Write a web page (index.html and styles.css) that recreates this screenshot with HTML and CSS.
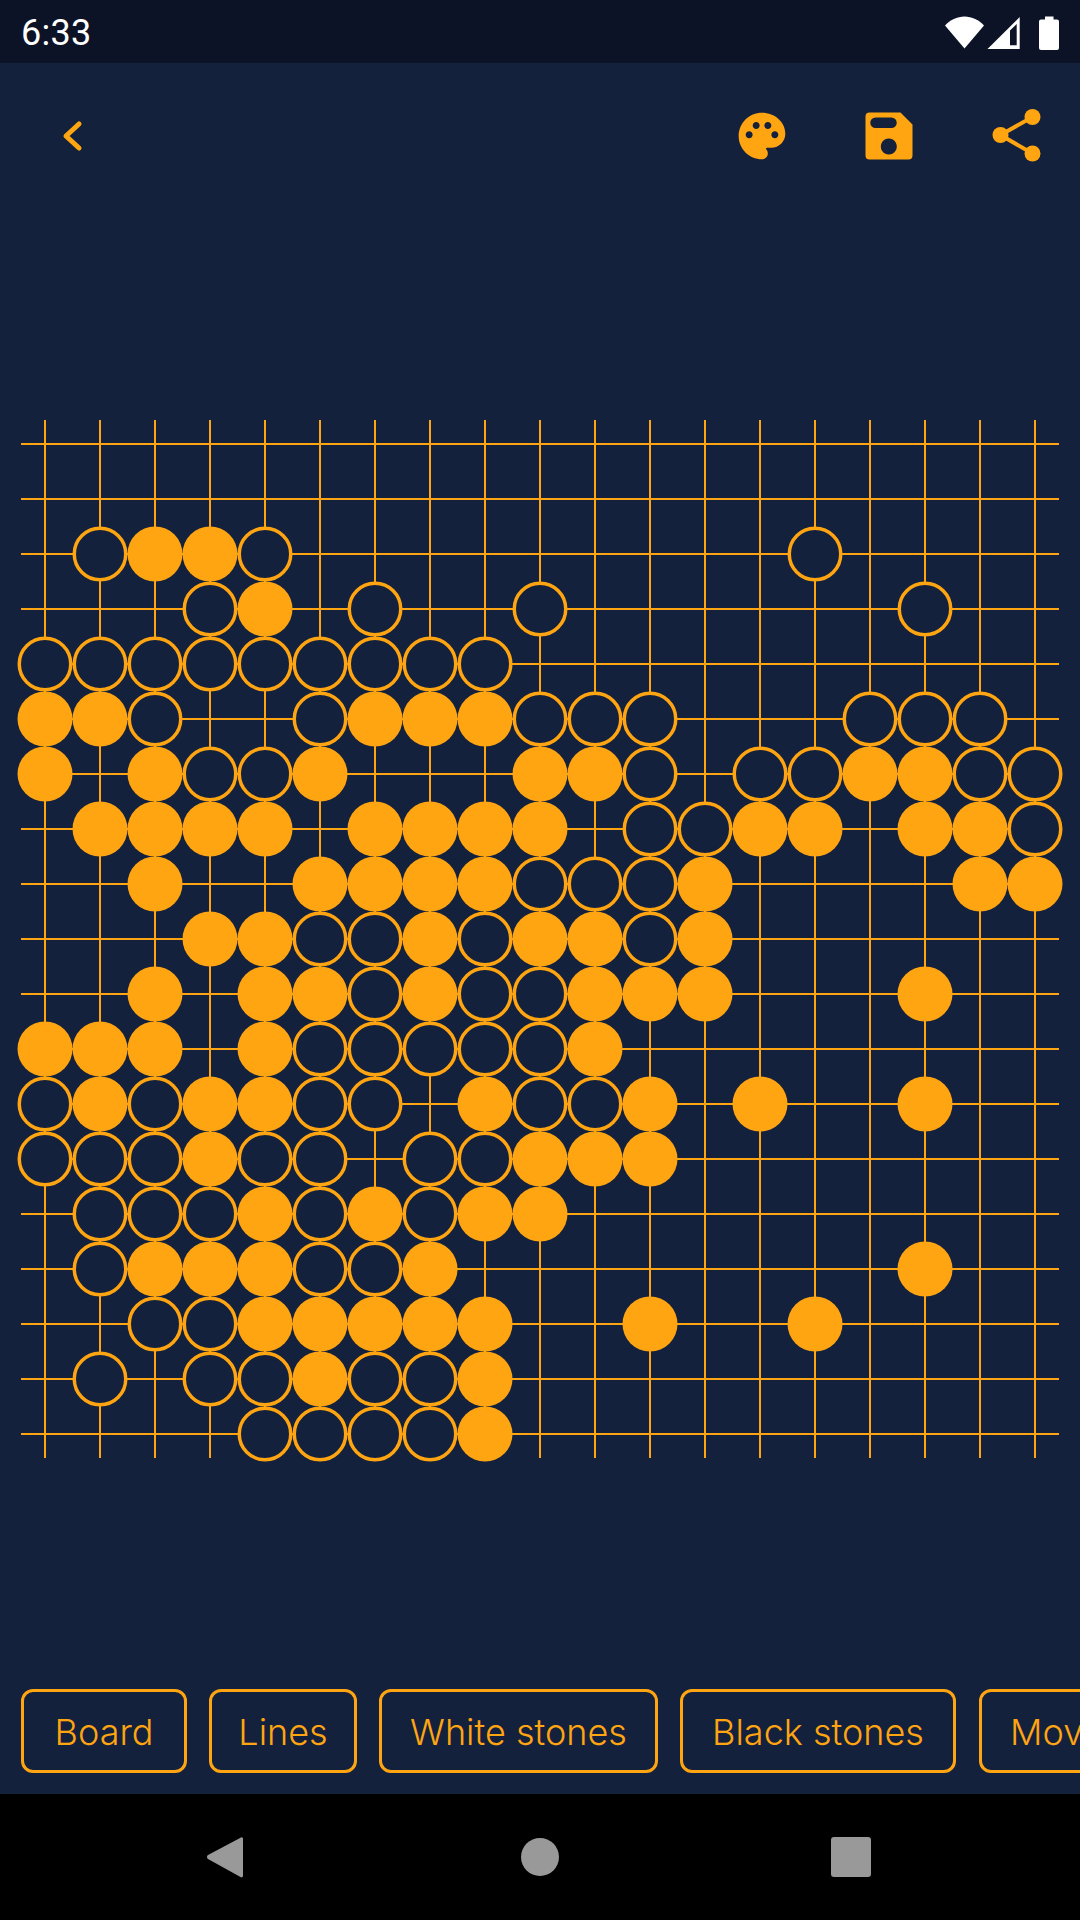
FILE: index.html
```html
<!DOCTYPE html>
<html lang="en">
<head>
  <meta charset="UTF-8" />
  <meta name="viewport" content="width=device-width, initial-scale=1.0"/>
  <title>Board theme</title>
  <link rel="stylesheet" href="styles.css">
</head>
<body>
  <div class="screen">
    <div class="status-bar">
      <span class="clock">6:33</span>
      <svg class="status-icons" width="118" height="36" viewBox="0 0 118 36">
        <path class="white" d="M4 11.5C9 6 16 2.5 23.5 2.500S38 6 43 11.500L23.500 34.500Z"/>
        <path class="white" d="M78.700 3V35H46.500Z"/>
        <path class="dim" d="M69 16.500L75.700 10V31.200H69Z"/>
        <path class="white" d="M104 2.500H112.500V5.500H116a2 2 0 0 1 2 2V34a2 2 0 0 1-2 2H100a2 2 0 0 1-2-2V7.500a2 2 0 0 1 2-2H104Z"/>
      </svg>
    </div>

    <div class="toolbar">
      <svg class="icon back" width="24" height="34" viewBox="0 0 24 34">
        <polyline points="19,5 6,17 19,29"/>
      </svg>
      <div class="actions">
        <svg class="icon" width="56" height="56" viewBox="0 0 24 24">
          <path class="solid" fill-rule="evenodd" d="M12 2C6.490 2 2 6.490 2 12s4.490 10 10 10c1.380 0 2.500-1.120 2.500-2.500 0-.61-.23-1.200-.64-1.670-.08-.1-.13-.21-.13-.33 0-.28.22-.5.5-.5H16c3.310 0 6-2.690 6-6 0-4.960-4.490-9-10-9zm5.500 11c-.83 0-1.500-.67-1.500-1.500s.67-1.500 1.500-1.500 1.500.67 1.500 1.500-.67 1.500-1.500 1.500zm-3-4c-.83 0-1.500-.67-1.500-1.500S13.670 6 14.500 6s1.500.67 1.500 1.500S15.330 9 14.500 9zM5 11.500c0-.83.67-1.500 1.500-1.500s1.500.67 1.500 1.500S7.330 13 6.500 13 5 12.330 5 11.500zm6-4c0 .83-.67 1.500-1.500 1.500S8 8.330 8 7.500 8.670 6 9.500 6s1.500.67 1.500 1.500z"/>
        </svg>
        <svg class="icon" width="56" height="56" viewBox="-4.500 -4.500 56 56">
          <path class="solid" fill-rule="evenodd" d="M4 0H35L47 12V43a4 4 0 0 1-4 4H4a4 4 0 0 1-4-4V4a4 4 0 0 1 4-4ZM10 5a5 5 0 0 0 0 10.500H26a5 5 0 0 0 0-10.500ZM23.300 26a8 8 0 1 0 .01 0Z"/>
        </svg>
        <svg class="icon" width="56" height="56" viewBox="0 0 56 56">
          <g class="solid">
            <circle cx="44.500" cy="9" r="8"/>
            <circle cx="12.500" cy="27" r="8"/>
            <circle cx="44.500" cy="45.500" r="8"/>
          </g>
          <polyline class="share-line" points="44.500,9 12.500,27 44.500,45.500"/>
        </svg>
      </div>
    </div>

    <svg id="board" class="board" width="1080" height="1050" viewBox="0 0 1080 1050"></svg>

    <div class="chips">
      <button type="button" class="chip chip-board">Board</button>
      <button type="button" class="chip chip-lines">Lines</button>
      <button type="button" class="chip chip-white">White stones</button>
      <button type="button" class="chip chip-black">Black stones</button>
      <button type="button" class="chip chip-moves">Moves</button>
    </div>

    <div class="nav-bar">
      <svg width="40" height="44" viewBox="0 0 40 44">
        <path class="nav-shape" d="M36 2.500a1.500 1.500 0 0 1 2 1V41a1.500 1.500 0 0 1-2.500 1L3 24a2.500 2.500 0 0 1 0-4Z"/>
      </svg>
      <span class="nav-home"></span>
      <span class="nav-recent"></span>
    </div>
  </div>

  <script src="board.js"></script>
</body>
</html>
```

FILE: styles.css
```css
html, body {
  margin: 0;
  padding: 0;
}
body {
  width: 1080px;
  height: 1920px;
  overflow: hidden;
  background: #14213d;
}
.screen {
  display: flex;
  flex-direction: column;
  width: 1080px;
  height: 1920px;
  overflow: hidden;
}

.status-bar {
  display: flex;
  align-items: center;
  justify-content: space-between;
  flex: none;
  height: 63px;
  padding: 0 21px 0 21px;
  box-sizing: border-box;
  background: #0d1326;
}
.clock {
  margin-top: 3px;
  font-family: Roboto, sans-serif;
  font-size: 36px;
  letter-spacing: 0.3px;
  color: #fff;
}
.white { fill: #fff; }
.dim { fill: #0d1326; }

.toolbar {
  display: flex;
  align-items: center;
  justify-content: space-between;
  flex: none;
  height: 145px;
  padding: 0 36px 0 60px;
  box-sizing: border-box;
}
.actions {
  display: flex;
  align-items: center;
  gap: 71px;
}
.icon { display: block; }
.solid { fill: #ffa511; }
.back polyline {
  fill: none;
  stroke: #ffa511;
  stroke-width: 5;
  stroke-linecap: round;
  stroke-linejoin: round;
}
.share-line {
  fill: none;
  stroke: #ffa511;
  stroke-width: 4;
}

.board {
  display: block;
  flex: none;
  margin-top: 211px;
}
.grid-line {
  stroke: #ffa511;
  stroke-width: 2;
}
.stone-white {
  fill: #14213d;
  stroke: #ffa511;
  stroke-width: 3.5;
}
.stone-black { fill: #ffa511; }

.chips {
  display: flex;
  gap: 22px;
  flex: none;
  margin-top: auto;
  padding: 0 0 21px 21px;
}
.chip {
  flex: none;
  height: 84px;
  padding: 2px 0 0;
  box-sizing: border-box;
  border: 3px solid #ffa511;
  border-radius: 12px;
  background: transparent;
  font-family: Inter, sans-serif;
  font-size: 36px;
  font-weight: 350;
  color: #ffa511;
}
.chip-board { width: 166px; }
.chip-lines { width: 148px; }
.chip-white { width: 279px; }
.chip-black { width: 276px; }
.chip-moves { width: 174px; margin-left: 1px; }

.nav-bar {
  display: flex;
  align-items: center;
  flex: none;
  gap: 0;
  height: 126px;
  background: #000;
  position: relative;
}
.nav-bar svg,
.nav-home,
.nav-recent {
  position: absolute;
}
.nav-bar svg { left: 205px; top: 41px; }
.nav-shape { fill: #999; }
.nav-home {
  left: 521px;
  top: 44px;
  width: 38px;
  height: 38px;
  border-radius: 50%;
  background: #999;
}
.nav-recent {
  left: 831px;
  top: 43px;
  width: 40px;
  height: 40px;
  border-radius: 3px;
  background: #999;
}
```

FILE: board.js
```js
// O = hollow stone, X = filled stone
const rows = [
  "...................",
  "...................",
  ".OXXO.........O....",
  "...OX.O..O......O..",
  "OOOOOOOOO..........",
  "XXO..OXXXOOO...OOO.",
  "X.XOOX...XXO.OOXXOO",
  ".XXXX.XXXX.OOXX.XXO",
  "..X..XXXXOOOX....XX",
  "...XXOOXOXXOX......",
  "..X.XXOXOOXXX...X..",
  "XXX.XOOOOOX........",
  "OXOXXOO.XOOX.X..X..",
  "OOOXOO.OOXXX.......",
  ".OOOXOXOXX.........",
  ".OXXXOOX........X..",
  "..OOXXXXX..X..X....",
  ".O.OOXOOX..........",
  "....OOOOX.........."
];

const svg = document.getElementById('board');
const NS = 'http://www.w3.org/2000/svg';
const left = 45, top0 = 25, gap = 55, over = 24;

function add(tag, cls, attrs) {
  const el = document.createElementNS(NS, tag);
  el.setAttribute('class', cls);
  Object.keys(attrs).forEach(k => el.setAttribute(k, attrs[k]));
  svg.appendChild(el);
}

for (let i = 0; i < 19; i++) {
  const x = left + i * gap, y = top0 + i * gap;
  add('line', 'grid-line', { x1: x, x2: x, y1: top0 - over, y2: top0 + 18 * gap + over });
  add('line', 'grid-line', { x1: left - over, x2: left + 18 * gap + over, y1: y, y2: y });
}

rows.forEach((row, r) => {
  row.split('').forEach((c, i) => {
    const pos = { cx: left + i * gap, cy: top0 + r * gap };
    if (c === 'O') add('circle', 'stone-white', { ...pos, r: 25.75 });
    if (c === 'X') add('circle', 'stone-black', { ...pos, r: 27.5 });
  });
});
```
